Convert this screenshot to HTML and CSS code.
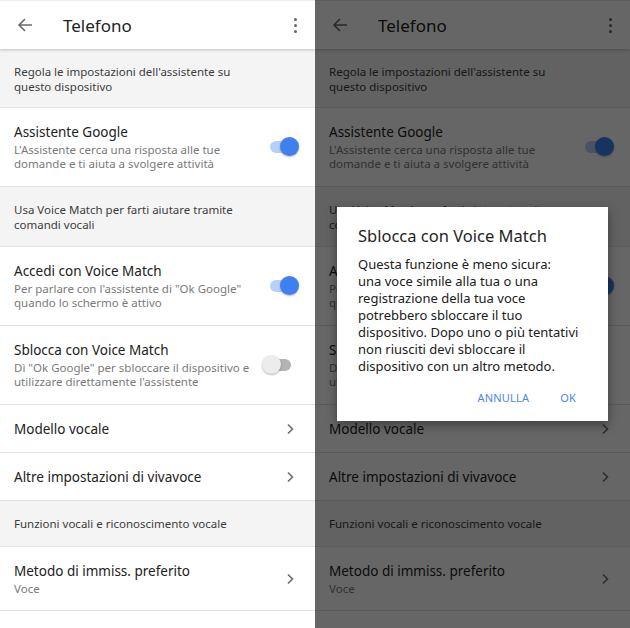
FILE: index.html
```html
<!DOCTYPE html>
<html lang="it">
<head>
<meta charset="utf-8">
<link rel="stylesheet" href="styles.css">
</head>
<body>
<div class="pair">
  <div class="screen">
    <header class="appbar">
      <svg class="back" width="16" height="16" viewBox="0 0 16 16"><path d="M15 8H2M8 2L2 8l6 6" fill="none" stroke="#6b6b6b" stroke-width="1.6"/></svg>
      <span class="apptitle">Telefono</span>
      <span class="dots"><i></i><i></i><i></i></span>
    </header>
    <div class="section s1">Regola le impostazioni dell'assistente su<br>questo dispositivo</div>
    <div class="item tall">
      <div class="texts"><div class="title">Assistente Google</div><div class="sub">L'Assistente cerca una risposta alle tue<br>domande e ti aiuta a svolgere attività</div></div>
      <span class="toggle on"><span class="knob"></span></span>
    </div>
    <div class="section s2">Usa Voice Match per farti aiutare tramite<br>comandi vocali</div>
    <div class="item tall">
      <div class="texts"><div class="title">Accedi con Voice Match</div><div class="sub">Per parlare con l'assistente di "Ok Google"<br>quando lo schermo è attivo</div></div>
      <span class="toggle on"><span class="knob"></span></span>
    </div>
    <div class="item tall">
      <div class="texts"><div class="title">Sblocca con Voice Match</div><div class="sub">Dì "Ok Google" per sbloccare il dispositivo e<br>utilizzare direttamente l'assistente</div></div>
      <span class="toggle off"><span class="knob"></span></span>
    </div>
    <div class="item short">
      <div class="texts"><div class="title">Modello vocale</div></div>
      <svg class="chev" width="8" height="12" viewBox="0 0 8 12"><path d="M2 1.5l4.5 4.5L2 10.5" fill="none" stroke="#6d6d6d" stroke-width="1.6"/></svg>
    </div>
    <div class="item short">
      <div class="texts"><div class="title">Altre impostazioni di vivavoce</div></div>
      <svg class="chev" width="8" height="12" viewBox="0 0 8 12"><path d="M2 1.5l4.5 4.5L2 10.5" fill="none" stroke="#6d6d6d" stroke-width="1.6"/></svg>
    </div>
    <div class="section s3">Funzioni vocali e riconoscimento vocale</div>
    <div class="item mid">
      <div class="texts"><div class="title">Metodo di immiss. preferito</div><div class="sub">Voce</div></div>
      <svg class="chev" width="8" height="12" viewBox="0 0 8 12"><path d="M2 1.5l4.5 4.5L2 10.5" fill="none" stroke="#6d6d6d" stroke-width="1.6"/></svg>
    </div>
  </div>

  <div class="screen">
    <header class="appbar">
      <svg class="back" width="16" height="16" viewBox="0 0 16 16"><path d="M15 8H2M8 2L2 8l6 6" fill="none" stroke="#6b6b6b" stroke-width="1.6"/></svg>
      <span class="apptitle">Telefono</span>
      <span class="dots"><i></i><i></i><i></i></span>
    </header>
    <div class="section s1">Regola le impostazioni dell'assistente su<br>questo dispositivo</div>
    <div class="item tall">
      <div class="texts"><div class="title">Assistente Google</div><div class="sub">L'Assistente cerca una risposta alle tue<br>domande e ti aiuta a svolgere attività</div></div>
      <span class="toggle on"><span class="knob"></span></span>
    </div>
    <div class="section s2">Usa Voice Match per farti aiutare tramite<br>comandi vocali</div>
    <div class="item tall">
      <div class="texts"><div class="title">Accedi con Voice Match</div><div class="sub">Per parlare con l'assistente di "Ok Google"<br>quando lo schermo è attivo</div></div>
      <span class="toggle on"><span class="knob"></span></span>
    </div>
    <div class="item tall">
      <div class="texts"><div class="title">Sblocca con Voice Match</div><div class="sub">Dì "Ok Google" per sbloccare il dispositivo e<br>utilizzare direttamente l'assistente</div></div>
      <span class="toggle off"><span class="knob"></span></span>
    </div>
    <div class="item short">
      <div class="texts"><div class="title">Modello vocale</div></div>
      <svg class="chev" width="8" height="12" viewBox="0 0 8 12"><path d="M2 1.5l4.5 4.5L2 10.5" fill="none" stroke="#6d6d6d" stroke-width="1.6"/></svg>
    </div>
    <div class="item short">
      <div class="texts"><div class="title">Altre impostazioni di vivavoce</div></div>
      <svg class="chev" width="8" height="12" viewBox="0 0 8 12"><path d="M2 1.5l4.5 4.5L2 10.5" fill="none" stroke="#6d6d6d" stroke-width="1.6"/></svg>
    </div>
    <div class="section s3">Funzioni vocali e riconoscimento vocale</div>
    <div class="item mid">
      <div class="texts"><div class="title">Metodo di immiss. preferito</div><div class="sub">Voce</div></div>
      <svg class="chev" width="8" height="12" viewBox="0 0 8 12"><path d="M2 1.5l4.5 4.5L2 10.5" fill="none" stroke="#6d6d6d" stroke-width="1.6"/></svg>
    </div>

    <div class="scrim">
      <div class="dialog">
        <div class="dtitle">Sblocca con Voice Match</div>
        <div class="dbody">Questa funzione è meno sicura:<br>una voce simile alla tua o una<br>registrazione della tua voce<br>potrebbero sbloccare il tuo<br>dispositivo. Dopo uno o più tentativi<br>non riusciti devi sbloccare il<br>dispositivo con un altro metodo.</div>
        <div class="dactions"><span class="btn">ANNULLA</span><span class="btn">OK</span></div>
      </div>
    </div>
  </div>
</div>
</body>
</html>
```

FILE: styles.css
```css
* { box-sizing: border-box; }
html, body { margin: 0; padding: 0; }
body {
  font-family: "Noto Sans", "Open Sans", sans-serif;
  width: 630px;
  height: 628px;
  overflow: hidden;
  background: #fff;
}
.pair { display: flex; }
.screen {
  position: relative;
  width: 315px;
  height: 628px;
  overflow: hidden;
  background: #fff;
  display: flex;
  flex-direction: column;
}
.appbar {
  height: 49px;
  flex: none;
  display: flex;
  align-items: center;
  background: #fff;
  border-top: 1px solid #ececec;
  box-shadow: 0 1px 3px rgba(0,0,0,0.22);
  position: relative;
  z-index: 1;
  padding: 0 0 0 17px;
}
.back { flex: none; }
.apptitle {
  margin-left: 30px;
  font-size: 17px;
  color: #222;
  flex: 1;
}
.dots {
  display: flex;
  flex-direction: column;
  gap: 3px;
  margin-right: 18px;
}
.dots i {
  display: block;
  width: 3px;
  height: 3px;
  background: #666;
  border-radius: 50%;
}
.section {
  background: #f4f4f4;
  font-size: 11.5px;
  line-height: 15px;
  color: #3c3c3c;
  padding: 15px 14px 0;
  border-bottom: 1px solid #e4e4e4;
  flex: none;
}
.s1 { height: 59px; }
.s2 { height: 60px; }
.s3 { height: 46px; }
.item {
  display: flex;
  align-items: center;
  padding: 0 17px 0 14px;
  border-bottom: 1px solid #e2e2e2;
  flex: none;
}
.item.tall { height: 79px; }
.item.short { height: 48px; }
.item.mid { height: 64px; }
.texts { flex: 1; }
.title {
  font-size: 13.5px;
  line-height: 18px;
  color: #212121;
}
.sub {
  font-size: 11.5px;
  line-height: 14px;
  color: #7a7a7a;
  margin-top: 2px;
}
.toggle {
  position: relative;
  width: 28px;
  height: 12px;
  border-radius: 6px;
  flex: none;
}
.toggle .knob {
  position: absolute;
  top: -4px;
  width: 19px;
  height: 19px;
  border-radius: 50%;
  box-shadow: 0 1px 2px rgba(0,0,0,0.3);
}
.toggle.on { background: #b6d0fa; }
.toggle.on .knob { right: -1px; background: #3f80ef; }
.toggle.off { background: #b4b4b4; margin-right: 7px; }
.toggle.off .knob { left: -1px; background: #ececec; }
.chev { flex: none; margin-right: 4px; }

.scrim {
  position: absolute;
  inset: 0;
  background: rgba(0,0,0,0.6);
  z-index: 5;
}
.dialog {
  position: absolute;
  left: 22px;
  top: 207px;
  width: 271px;
  height: 214px;
  background: #fff;
  box-shadow: 0 4px 10px rgba(0,0,0,0.4);
  padding: 19px 21px 0 21px;
}
.dtitle {
  font-size: 16.5px;
  line-height: 20px;
  color: #1f1f1f;
}
.dbody {
  margin-top: 10px;
  font-size: 13px;
  line-height: 17px;
  color: #202020;
}
.dactions {
  display: flex;
  justify-content: flex-end;
  gap: 31px;
  margin-top: 15px;
  padding-right: 11px;
}
.btn {
  font-size: 11px;
  color: #4a86e8;
  letter-spacing: 0.2px;
}
```
